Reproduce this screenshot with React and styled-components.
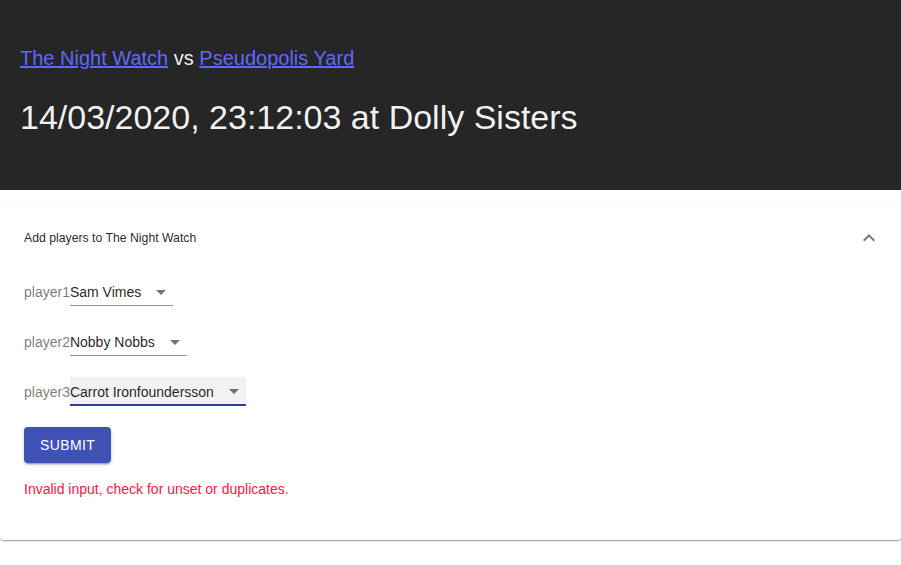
import React from 'react';
import styled, { createGlobalStyle } from 'styled-components';

const GlobalStyle = createGlobalStyle`
  body {
    margin: 0;
    padding-bottom: 24px;
    background: #fff;
    font-family: "Liberation Sans", Arial, sans-serif;
  }
`;

const Header = styled.header`
  height: 190px;
  box-sizing: border-box;
  padding: 44px 20px 0;
  background: #262626;
  color: rgba(255, 255, 255, 0.95);
`;

const Teams = styled.div`
  font-size: 20px;
  line-height: 28px;

  a {
    color: #5f69f8;
    text-decoration: underline;
  }
`;

const When = styled.h1`
  margin: 25px 0 0;
  font-size: 34px;
  font-weight: 400;
  line-height: 40px;
`;

const Panel = styled.section`
  margin-top: 16px;
  background: #fff;
  border-bottom: 1px solid rgba(0, 0, 0, 0.32);
  border-radius: 0 0 4px 4px;
  box-shadow: 0px 1px 1px 0px rgba(0, 0, 0, 0.1), 0px -1px 0px 0px rgba(0, 0, 0, 0.03);
`;

const Summary = styled.div`
  display: flex;
  align-items: center;
  justify-content: space-between;
  height: 64px;
  padding: 0 20px 0 24px;
  font-size: 12.25px;
  color: rgba(0, 0, 0, 0.87);
`;

const Chevron = styled.svg`
  width: 24px;
  height: 24px;
  fill: rgba(0, 0, 0, 0.54);
`;

const Details = styled.div`
  padding: 7px 24px 23px;
`;

const Row = styled.div`
  display: flex;
  align-items: baseline;
  margin-bottom: 21px;
`;

const Label = styled.span`
  font-size: 14px;
  color: rgba(0, 0, 0, 0.54);
`;

const Select = styled.div`
  position: relative;
  box-sizing: border-box;
  height: 29px;
  padding: 7px 32px 6px 0;
  font-size: 14px;
  line-height: 16px;
  color: rgba(0, 0, 0, 0.87);
  background: ${(p) => (p.$focused ? 'rgba(0, 0, 0, 0.05)' : 'transparent')};
  border-bottom: ${(p) => (p.$focused ? '2px solid #303f9f' : '1px solid rgba(0, 0, 0, 0.42)')};

  svg {
    position: absolute;
    right: 0;
    top: ${(p) => (p.$focused ? '2px' : '3px')};
    width: 24px;
    height: 24px;
    fill: rgba(0, 0, 0, 0.54);
  }
`;

const Button = styled.button`
  display: block;
  min-width: 64px;
  height: 36px;
  padding: 6px 16px;
  border: 0;
  border-radius: 4px;
  background: #3f51b5;
  color: #fff;
  font-family: "Liberation Sans", Arial, sans-serif;
  font-size: 14px;
  font-weight: 400;
  letter-spacing: 0.02857em;
  text-transform: uppercase;
  box-shadow: 0px 3px 1px -2px rgba(0, 0, 0, 0.2), 0px 2px 2px 0px rgba(0, 0, 0, 0.14),
    0px 1px 5px 0px rgba(0, 0, 0, 0.12);
`;

const ErrorText = styled.p`
  margin: 16px 0 18px;
  font-size: 14px;
  line-height: 20px;
  color: #f5174a;
`;

const Arrow = () => (
  <svg viewBox="0 0 24 24">
    <path d="M7 10l5 5 5-5z" />
  </svg>
);

const players = [
  { label: 'player1', name: 'Sam Vimes' },
  { label: 'player2', name: 'Nobby Nobbs' },
  { label: 'player3', name: 'Carrot Ironfoundersson', focused: true },
];

export default function App() {
  return (
    <>
      <GlobalStyle />
      <Header>
        <Teams>
          <a href="#home">The Night Watch</a> vs <a href="#away">Pseudopolis Yard</a>
        </Teams>
        <When>14/03/2020, 23:12:03 at Dolly Sisters</When>
      </Header>
      <Panel>
        <Summary>
          <span>Add players to The Night Watch</span>
          <Chevron viewBox="0 0 24 24">
            <path d="M12 8l-6 6 1.41 1.41L12 10.83l4.59 4.58L18 14z" />
          </Chevron>
        </Summary>
        <Details>
          {players.map((p) => (
            <Row key={p.label}>
              <Label>{p.label}</Label>
              <Select $focused={p.focused}>
                {p.name}
                <Arrow />
              </Select>
            </Row>
          ))}
          <Button>Submit</Button>
          <ErrorText>Invalid input, check for unset or duplicates.</ErrorText>
        </Details>
      </Panel>
    </>
  );
}
